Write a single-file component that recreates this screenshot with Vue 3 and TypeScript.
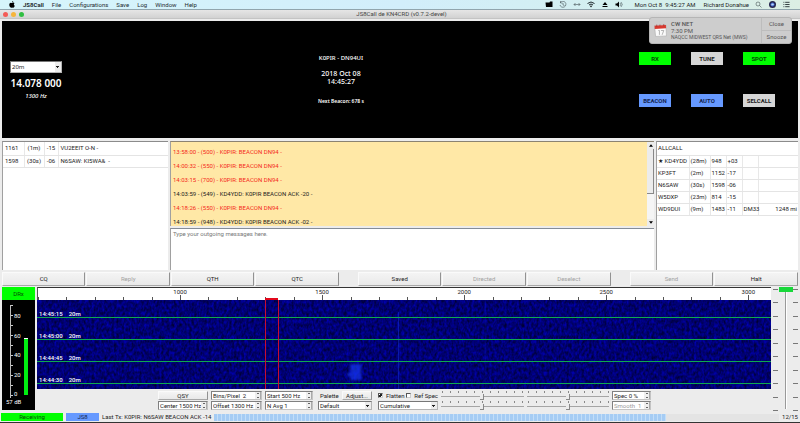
<script setup lang="ts">
import { ref } from 'vue'

interface LogLine { text: string; own: boolean }
interface Heard { call: string; age: string; offset: string; snr: string; grid: string; distance: string }

const menus = ['File', 'Configurations', 'Save', 'Log', 'Window', 'Help']
const band = ref('20m')
const palette = ref('Default')
const mode = ref('Cumulative')
const flatten = ref(true)
const refSpec = ref(false)
const outgoing = ref('')

const toggles = [
  { label: 'RX', tone: 'green' },
  { label: 'TUNE', tone: 'grey' },
  { label: 'SPOT', tone: 'green' },
  { label: 'BEACON', tone: 'blue' },
  { label: 'AUTO', tone: 'blue' },
  { label: 'SELCALL', tone: 'grey' },
]

const activity = [
  ['1161', '(1m)', '-15', 'VU2EEIT O-N -'],
  ['1598', '(30s)', '-06', 'N6SAW: KI5WA&  -'],
]

const log: LogLine[] = [
  { text: '13:58:00 - (500) - K0PIR: BEACON DN94 -', own: true },
  { text: '14:00:32 - (550) - K0PIR: BEACON DN94 -', own: true },
  { text: '14:03:15 - (700) - K0PIR: BEACON DN94 -', own: true },
  { text: '14:03:59 - (549) - KD4YDD: K0PIR BEACON ACK -20 -', own: false },
  { text: '14:18:26 - (550) - K0PIR: BEACON DN94 -', own: true },
  { text: '14:18:59 - (948) - KD4YDD: K0PIR BEACON ACK -02 -', own: false },
]

const heard: Heard[] = [
  { call: '★ KD4YDD', age: '(28m)', offset: '948', snr: '+03', grid: '', distance: '' },
  { call: 'KP3FT', age: '(2m)', offset: '1152', snr: '-17', grid: '', distance: '' },
  { call: 'N6SAW', age: '(30s)', offset: '1598', snr: '-06', grid: '', distance: '' },
  { call: 'W5DXP', age: '(23m)', offset: '814', snr: '-15', grid: '', distance: '' },
  { call: 'WD9DUI', age: '(9m)', offset: '1483', snr: '-11', grid: 'DM33', distance: '1248 mi' },
]

const actionGroups = [
  [{ t: 'CQ', off: false }, { t: 'Reply', off: true }, { t: 'QTH', off: false }, { t: 'QTC', off: false }],
  [{ t: 'Saved', off: false }, { t: 'Directed', off: true }, { t: 'Deselect', off: true }],
  [{ t: 'Send', off: true }, { t: 'Halt', off: false }],
]

const spanHz = 2580
const startHz = 500
const ticks = Array.from({ length: 26 }, (_, i) => startHz + i * 100)
const majors = [1000, 1500, 2000, 2500, 3000]
const pos = (hz: number): string => `${((hz - startHz) / spanHz) * 100}%`

const sweeps = ['14:45:15', '14:45:00', '14:44:45', '14:44:30']
const meterLabels = ['80', '60', '40', '20', '0']

const spinners = [
  [{ v: 'Bins/Pixel  2' }, { v: 'Offset 1300 Hz' }],
  [{ v: 'Start 500 Hz' }, { v: 'N Avg 1' }],
]
const sliders = ['Gain', 'Spectrum gain', 'Zero', 'Spectrum zero']
</script>

<template>
  <div class="desktop">
    <header class="menubar">
      <svg class="apple" viewBox="0 0 14 16" aria-hidden="true">
        <path d="M9.8 0c.1 1.5-1.200 3.200-2.900 3.200C6.700 1.700 8.200.2 9.800 0zM7.200 4.400c.8 0 1.700-.8 3-.8 1.200 0 2.200.6 2.800 1.500-2.500 1.500-2 4.900.5 5.900-.7 2-2.100 4.400-3.600 4.400-1 0-1.400-.6-2.600-.6s-1.700.6-2.600.6C2.700 15.400.6 11.700.6 8.700c0-3.100 1.900-4.900 3.900-4.900 1.200 0 2 .6 2.700.6z" />
      </svg>
      <a class="menu app-name" href="#">JS8Call</a>
      <a v-for="m in menus" :key="m" class="menu" href="#">{{ m }}</a>
      <span class="spring"></span>
      <div class="tray">
        <svg viewBox="0 0 16 14" aria-hidden="true"><path d="M1 3h8l1-2h5v11H2z" /></svg>
        <svg viewBox="0 0 16 14" aria-hidden="true"><path class="line" d="M3 3a6 6 0 1 1-1 5M3 0v4h4M8 4v4l3 1" /></svg>
        <svg viewBox="0 0 16 14" aria-hidden="true"><path class="line" d="M2 7h12M5 4 2 7l3 3M11 4l3 3-3 3" /></svg>
        <svg viewBox="0 0 16 14" aria-hidden="true"><path class="thick" d="M1 5q7-6 14 0M4 8q4-4 8 0" /><path d="M6 10q2-2 4 0l-2 3z" /></svg>
        <svg viewBox="0 0 16 14" aria-hidden="true"><path d="M8 2l5 6H3zM3 10h10v2H3z" /></svg>
        <svg viewBox="0 0 16 14" aria-hidden="true"><path d="M1 5h3l4-4v12L4 9H1z" /><path class="line" d="M10 4q3 3 0 6M12 2q5 5 0 10" /></svg>
      </div>
      <span class="clock">Mon Oct 8&nbsp; 9:45:27 AM</span>
      <span class="user">Richard Donahue</span>
      <div class="tray-end">
        <svg viewBox="0 0 14 14" aria-hidden="true"><circle class="line" cx="6" cy="6" r="4" /><path class="line" d="M9 9l4 4" /></svg>
        <svg viewBox="0 0 14 14" aria-hidden="true"><circle cx="7" cy="7" r="7" fill="#26264e" /><circle cx="7" cy="7" r="4" fill="#4568d2" /><path d="M4 8q3-5 6-1-3 3-6 1z" fill="#b9d8f8" /></svg>
        <svg viewBox="0 0 16 14" aria-hidden="true"><path class="thick" d="M1 2h2M5 2h10M1 7h2M5 7h10M1 12h2M5 12h10" /></svg>
      </div>
    </header>

    <div class="titlebar">
      <div class="lights"><i class="red"></i><i class="amber"></i><i class="lime"></i></div>
      <h1>JS8Call de KN4CRD (v0.7.2-devel)</h1>
    </div>

    <aside class="notice">
      <svg viewBox="0 0 24 24" aria-hidden="true">
        <path d="M1 3l21-1 1 20-20 1z" fill="#fafafa" stroke="#a7a7a7" />
        <path d="M1 3l21-1 .3 6L1.300 9z" fill="#d83a30" />
        <path d="M5 1v4M11 1v3M18 0v4" stroke="#922" />
        <path d="M8 12h2v8M13 12h5l-3 8" fill="none" stroke="#777" />
      </svg>
      <div class="notice-text"><b>CW NET</b><span>7:30 PM</span><small>NAQCC MIDWEST QRS Net (MWS)</small></div>
      <div class="notice-actions"><button>Close</button><button>Snooze</button></div>
    </aside>

    <main class="window">
      <section class="radio">
        <div class="tuning">
          <select v-model="band" class="field band" aria-label="Band"><option>20m</option></select>
          <strong>14.078 000</strong>
          <em>1300 Hz</em>
        </div>
        <div class="station">
          <b>K0PIR - DN94UI</b>
          <div class="date"><span>2018 Oct 08</span><span>14:45:27</span></div>
          <small>Next Beacon: 678 s</small>
        </div>
        <div class="toggles">
          <button v-for="t in toggles" :key="t.label" :class="t.tone">{{ t.label }}</button>
        </div>
      </section>

      <section class="panels">
        <div class="sunken">
          <table class="grid activity">
            <tbody>
              <tr v-for="row in activity" :key="row[0]"><td v-for="c in row" :key="c">{{ c }}</td></tr>
            </tbody>
          </table>
        </div>
        <div class="conversation">
          <div class="log">
            <div class="lines">
              <p v-for="l in log" :key="l.text" :class="{ own: l.own }">{{ l.text }}</p>
            </div>
            <div class="scrollbar">
              <button aria-label="Scroll up"><svg viewBox="0 0 6 4"><path d="M0 4l3-4 3 4z" /></svg></button>
              <span class="thumb"></span><span class="track"></span>
              <button aria-label="Scroll down"><svg viewBox="0 0 6 4"><path d="M0 0l3 4 3-4z" /></svg></button>
            </div>
          </div>
          <textarea v-model="outgoing" aria-label="Outgoing message" placeholder="Type your outgoing messages here."></textarea>
        </div>
        <div class="sunken">
          <table class="grid heard">
            <colgroup><col class="c-call" /><col class="c-age" /><col class="c-num" /><col class="c-num" /><col class="c-num" /><col /></colgroup>
            <tbody>
              <tr><td colspan="6">ALLCALL</td></tr>
              <tr v-for="h in heard" :key="h.call">
                <td>{{ h.call }}</td><td>{{ h.age }}</td><td>{{ h.offset }}</td><td>{{ h.snr }}</td><td>{{ h.grid }}</td><td class="distance">{{ h.distance }}</td>
              </tr>
            </tbody>
          </table>
        </div>
      </section>

      <nav class="actions">
        <div v-for="(g, i) in actionGroups" :key="i" class="group" :class="'group-' + g.length">
          <button v-for="a in g" :key="a.t" class="push" :disabled="a.off">{{ a.t }}</button>
        </div>
      </nav>

      <section class="spectrum">
        <div class="meter">
          <div class="meter-head">DRx</div>
          <div class="meter-body">
            <div class="meter-scale"><span v-for="m in meterLabels" :key="m">{{ m }}</span></div>
            <div class="meter-level"><i></i></div>
          </div>
          <div class="meter-foot">57 dB</div>
        </div>

        <div class="middle">
          <div class="scale">
            <span v-for="t in ticks" :key="t" class="tick" :class="{ major: majors.includes(t) }" :style="{ left: pos(t) }"></span>
            <span v-for="m in majors" :key="'l' + m" class="hz" :style="{ left: pos(m) }">{{ m }}</span>
            <span class="passband" :style="{ left: pos(1300) }"></span>
          </div>
          <div class="waterfall">
            <svg class="noise" aria-hidden="true">
              <filter id="grain" x="0" y="0" width="100%" height="100%" color-interpolation-filters="sRGB">
                <feTurbulence type="fractalNoise" baseFrequency="0.4 0.25" numOctaves="2" seed="8" />
                <feColorMatrix values="0 0 0 0 0  0 0 0 0 0  0.7 0 0 0 0.1  0 0 0 0 1" />
              </filter>
              <filter id="soft"><feGaussianBlur stdDeviation="1" /></filter>
              <rect width="100%" height="100%" filter="url(#grain)" />
              <rect x="49.200%" y="12" width="1" height="77" fill="#1634d8" opacity=".55" />
              <rect x="61%" y="0" width="1" height="89" fill="#101cb4" opacity=".25" />
              <svg x="42%" y="62" width="20" height="22" viewBox="0 0 20 22">
                <path d="M5 2h11v16h-11v-4h-3v-3h3z" fill="#1838f4" opacity=".7" filter="url(#soft)" />
              </svg>
            </svg>
            <div v-for="s in sweeps" :key="s" class="sweep"><span>{{ s }}</span><span>20m</span></div>
            <span class="band-edges" :style="{ left: pos(1300) }"></span>
          </div>

          <div class="controls">
            <div class="stack qsy">
              <button class="push small">QSY</button>
              <div class="spin"><input aria-label="Center" value="Center 1500 Hz" /><span class="steps"><button aria-label="Up"></button><button aria-label="Down"></button></span></div>
            </div>
            <div v-for="(col, i) in spinners" :key="i" class="stack" :class="'spins-' + i">
              <div v-for="s in col" :key="s.v" class="spin"><input :aria-label="s.v" :value="s.v" /><span class="steps"><button aria-label="Up"></button><button aria-label="Down"></button></span></div>
            </div>
            <div class="stack palette">
              <div class="pair"><label for="palette">Palette</label><button class="push small">Adjust...</button></div>
              <select id="palette" v-model="palette" class="field"><option>Default</option></select>
            </div>
            <div class="stack mode">
              <div class="pair checks">
                <label><input v-model="flatten" type="checkbox" />Flatten</label>
                <label><input v-model="refSpec" type="checkbox" />Ref Spec</label>
              </div>
              <select v-model="mode" class="field" aria-label="Spectrum mode"><option>Cumulative</option></select>
            </div>
            <div class="sliders">
              <input v-for="s in sliders" :key="s" type="range" value="50" :aria-label="s" />
            </div>
            <div class="stack spec">
              <div class="spin"><input aria-label="Spectrum share" value="Spec 0 %" /><span class="steps"><button aria-label="Up"></button><button aria-label="Down"></button></span></div>
              <div class="spin"><input aria-label="Smoothing" value="Smooth  1" disabled /><span class="steps"><button aria-label="Up" disabled></button><button aria-label="Down" disabled></button></span></div>
            </div>
          </div>
        </div>

        <div class="power">
          <div class="marks"><i v-for="n in 10" :key="n"></i></div>
          <input type="range" value="100" aria-label="Transmit power" />
          <div class="marks"><i v-for="n in 10" :key="n"></i></div>
        </div>
      </section>
    </main>

    <footer class="status">
      <span class="state">Receiving</span>
      <span class="proto">JS8</span>
      <span class="last">Last Tx: K0PIR: N6SAW BEACON ACK -14</span>
      <div class="progress" role="progressbar" aria-label="Period" aria-valuenow="12" aria-valuemax="15"><i :style="{ width: (12 / 15) * 100 + '%' }"></i></div>
      <span class="count">12/15</span>
    </footer>
  </div>
</template>

<style>
body {
  margin: 0;
  background: #ececec;
}
</style>

<style scoped>
* {
  box-sizing: border-box;
}
.desktop {
  position: relative;
  display: flex;
  flex-direction: column;
  min-height: 100vh;
  background: #ececec;
  border-bottom: 1px solid #333;
  font-family: Roboto, "Liberation Sans", sans-serif;
  font-size: 6px;
  line-height: 8px;
  color: #1c1c1c;
  overflow: hidden;
}
button, input, select, textarea {
  margin: 0;
  padding: 0;
  border: 0;
  border-radius: 0;
  font: inherit;
  color: inherit;
  min-width: 0;
}
h1 {
  margin: 0;
}

.menubar {
  display: flex;
  align-items: center;
  height: 10px;
  padding: 0 10px 0 9px;
  background: linear-gradient(90deg, #d6f5fb, #d2eefb 50%, #d4f0ee 80%, #dceee4);
  border-bottom: 1px solid #91a5ad;
}
.apple {
  width: 6px;
  height: 7px;
  margin-right: 8px;
}
.menu {
  margin-right: 8px;
  color: #1d2a30;
  text-decoration: none;
}
.app-name {
  font-weight: 700;
}
.spring {
  flex: 1;
}
.tray {
  display: flex;
  gap: 6px;
  margin-right: 12px;
}
.tray svg {
  width: 8px;
  height: 7px;
}
.clock {
  margin-right: 8px;
}
.user {
  margin-right: 6px;
}
.tray-end {
  display: flex;
  gap: 7px;
}
.tray-end svg {
  width: 7px;
  height: 7px;
}
.line {
  fill: none;
  stroke: #2b3438;
  stroke-width: 1;
}
.thick {
  fill: none;
  stroke: #1f282c;
  stroke-width: 2;
}

.titlebar {
  display: grid;
  grid-template-columns: 1fr auto 1fr;
  align-items: center;
  height: 9px;
  padding-left: 3px;
  background: linear-gradient(#e6e6e6, #d2d2d2);
  border-bottom: 1px solid #c4c4c4;
}
.titlebar h1 {
  font-size: 6px;
  font-weight: 400;
  color: #444;
}
.lights {
  display: flex;
  gap: 3px;
}
.lights i {
  width: 5px;
  height: 5px;
  border-radius: 50%;
}
.red { background: #f45b55; }
.amber { background: #f6b53c; }
.lime { background: #30bf42; }

.notice {
  position: absolute;
  top: 17px;
  right: 8px;
  z-index: 2;
  display: flex;
  align-items: center;
  width: 143px;
  height: 27px;
  border: 1px solid #b5b5b5;
  border-radius: 3px;
  background: #cdcdcd;
  color: #555;
}
.notice svg {
  width: 13px;
  height: 13px;
  margin: 0 4px;
}
.notice-text {
  flex: 1;
  display: flex;
  flex-direction: column;
  line-height: 7px;
  white-space: nowrap;
}
.notice-text b {
  font-weight: 500;
}
.notice-text small {
  font-size: 5px;
}
.notice-actions {
  display: flex;
  flex-direction: column;
  align-self: stretch;
  width: 30px;
  border-left: 1px solid #bdbdbd;
}
.notice-actions button {
  flex: 1;
  background: none;
}
.notice-actions button + button {
  border-top: 1px solid #bdbdbd;
}

.window {
  display: flex;
  flex-direction: column;
  flex: 1;
  padding: 2px 2px 0;
}
.radio {
  display: flex;
  min-height: 117px;
  background: #000;
  color: #fff;
  font-family: "Noto Sans", sans-serif;
}
.tuning {
  display: flex;
  flex-direction: column;
  align-items: center;
  width: 68px;
  padding-top: 40px;
}
.tuning strong {
  margin-top: 4px;
  font-size: 10px;
  font-weight: 600;
  line-height: 13px;
  white-space: nowrap;
}
.tuning em {
  margin-top: 2px;
  font-weight: 500;
}
.field {
  appearance: none;
  height: 9px;
  padding: 0 8px 0 1px;
  border: 1px solid #b4b4b4;
  border-top-color: #777;
  border-left-color: #777;
  color: #222;
  background:
    linear-gradient(#222, #222) right 2px top 3px / 3px 1px no-repeat,
    linear-gradient(#222, #222) right 3px top 4px / 1px 1px no-repeat,
    linear-gradient(#ececec, #ececec) right 0 top 0 / 6px 100% no-repeat,
    #fff;
}
.field.band {
  width: 52px;
  height: 12px;
  background-position: right 2px top 4px, right 3px top 5px, right 0 top 0;
}
.station {
  flex: 1;
  display: flex;
  flex-direction: column;
  align-items: center;
  padding-top: 33px;
}
.station b {
  font-weight: 500;
}
.date {
  display: flex;
  flex-direction: column;
  align-items: center;
  margin: 8px 0 11px;
  font-size: 7px;
  line-height: 8px;
  font-weight: 500;
}
.station small {
  font-size: 5px;
  font-weight: 600;
}
.toggles {
  display: grid;
  grid-template-columns: repeat(3, 32px);
  grid-auto-rows: 13px;
  gap: 29px 20px;
  padding: 31px 23px 0 27px;
}
.toggles button {
  font-family: Roboto, sans-serif;
  font-weight: 700;
  color: #1a1a1a;
}
.toggles .green { background: #0f0; color: #064a06; }
.toggles .grey { background: #d6d6d6; }
.toggles .blue { background: #69f; color: #142450; }

.panels {
  display: grid;
  grid-template-columns: minmax(0, 166fr) minmax(0, 484fr) minmax(0, 142fr);
  gap: 2px;
  flex: 1;
  margin-top: 3px;
  min-height: 129px;
}
.sunken {
  background: #fff;
  border-top: 1px solid #8b8b8b;
  border-left: 1px solid #a0a0a0;
}
.grid {
  width: 100%;
  border-collapse: collapse;
  white-space: pre;
}
.grid td {
  height: 12px;
  padding: 0 2px;
  border-right: 1px solid #e8e8e8;
  border-bottom: 1px solid #e4e4e4;
}
.grid tr:first-child td {
  height: 13px;
}
.grid td:last-child {
  border-right: 0;
}
.activity td:nth-child(1) { width: 21px; }
.activity td:nth-child(2) { width: 20px; text-align: center; }
.activity td:nth-child(3) { width: 14px; text-align: center; }
.heard {
  table-layout: fixed;
}
.heard td {
  padding: 0 1px;
}
.heard .distance {
  text-align: right;
}
.c-call { width: 32px; }
.c-age { width: 21px; }
.c-num { width: 16px; }

.conversation {
  display: flex;
  flex-direction: column;
  gap: 2px;
}
.log {
  display: flex;
  height: 85px;
  border-top: 1px solid #8b8371;
  border-left: 1px solid #a0a0a0;
  background: #ffe8a6;
}
.lines {
  flex: 1;
  padding: 3px 2px 0;
  overflow: hidden;
}
.lines p {
  height: 14px;
  line-height: 14px;
  margin: 0;
}
.lines .own {
  color: #f42a1a;
}
.scrollbar {
  display: flex;
  flex-direction: column;
  width: 7px;
  background: #f5f5f5;
}
.scrollbar button {
  display: flex;
  align-items: center;
  justify-content: center;
  height: 7px;
  background: #ececec;
}
.scrollbar svg {
  width: 4px;
  height: 3px;
}
.thumb {
  flex: 45;
  background: #ececec;
  border-right: 1px solid #888;
  border-bottom: 1px solid #888;
}
.track {
  flex: 25;
}
.conversation textarea {
  flex: 1;
  resize: none;
  padding: 1px 2px;
  border-top: 1px solid #858c96;
  border-left: 1px solid #a0a0a0;
  background: #fff;
  outline: 0;
}
textarea::placeholder {
  color: #777;
}

.push {
  background: linear-gradient(#f4f4f4, #e9e9e9);
  border: 1px solid #fafafa;
  border-right-color: #929292;
  border-bottom-color: #a8a8a8;
}
.push:disabled {
  color: #a2a2a2;
}
.actions {
  display: flex;
  gap: 19px;
  margin-top: 2px;
}
.group {
  display: flex;
  gap: 1px;
}
.group-4 { flex: 4; }
.group-3 { flex: 3; }
.group-2 { flex: 2; }
.group .push {
  flex: 1;
  height: 14px;
}

.spectrum {
  display: flex;
  gap: 2px;
  margin-top: 1px;
}
.meter {
  display: flex;
  flex-direction: column;
  width: 33px;
  margin-bottom: 2px;
  background: #000;
  color: #fff;
}
.meter-head {
  height: 13px;
  line-height: 13px;
  background: #0f0;
  color: #064a06;
  text-align: center;
}
.meter-body {
  flex: 1;
  display: flex;
  gap: 2px;
  padding: 5px 7px 0 8px;
}
.meter-scale {
  flex: 1;
  display: flex;
  flex-direction: column;
  justify-content: space-between;
  padding: 7px 0 0 3px;
  margin-bottom: -3px;
  background: repeating-linear-gradient(#ccc 0 1px, transparent 1px 10px) 0 0 / 2px 92px no-repeat;
  border-left: 1px solid #bbb;
}
.meter-level {
  flex: none;
  display: flex;
  align-items: flex-end;
  width: 4px;
}
.meter-level i {
  width: 100%;
  height: 57px;
  border-top: 1px solid #fff;
  background: #0e1;
}
.meter-foot {
  height: 15px;
  line-height: 14px;
  padding-left: 4px;
}
.middle {
  flex: 1;
  min-width: 0;
}
.scale {
  position: relative;
  height: 13px;
  background: #fff;
  border-top: 1px solid #333;
  border-left: 1px solid #555;
  overflow: hidden;
}
.tick {
  position: absolute;
  bottom: 0;
  width: 1px;
  height: 3px;
  background: #555;
}
.tick.major {
  height: 5px;
}
.hz {
  position: absolute;
  top: 0;
  transform: translateX(-50%);
}
.passband {
  position: absolute;
  bottom: 0;
  width: 13px;
  height: 2px;
  background: #e3081c;
}
.waterfall {
  position: relative;
  height: 89px;
  background: #00006c;
  overflow: hidden;
}
.noise {
  position: absolute;
  inset: 0;
  width: 100%;
  height: 100%;
}
.sweep {
  position: relative;
  display: flex;
  align-items: flex-end;
  gap: 6px;
  height: 22px;
  padding-left: 2px;
  border-bottom: 1px solid #0fa850;
  color: #fff;
  font-weight: 500;
  line-height: 7px;
}
.sweep:first-of-type {
  height: 18px;
}
.band-edges {
  position: absolute;
  top: 0;
  bottom: 0;
  width: 14px;
  border: solid #c80c30;
  border-width: 0 1px;
}
.controls {
  display: flex;
  gap: 3px;
  padding: 2px 0 2px;
  margin-left: 121px;
}
.stack {
  display: flex;
  flex-direction: column;
  gap: 1px;
  width: 51px;
}
.stack.spins-1 { width: 48px; }
.stack.palette { width: 54px; margin-left: 2px; }
.stack.mode { width: 60px; margin-left: 3px; }
.stack.spec { width: 39px; }
.stack.qsy { width: 50px; }
.push.small {
  height: 9px;
  line-height: 7px;
}
.spin {
  display: flex;
  height: 9px;
  background: #fff;
  border: 1px solid #c4c4c4;
  border-top-color: #808080;
  border-left-color: #808080;
}
.spin input {
  flex: 1;
  width: 0;
  padding-left: 1px;
  background: none;
  line-height: 7px;
  white-space: pre;
}
.spin input:disabled {
  color: #999;
}
.steps {
  display: flex;
  flex-direction: column;
  width: 6px;
  background: #eee;
}
.steps button {
  flex: 1;
  background: linear-gradient(#666, #666) center / 2px 1px no-repeat;
  border-right: 1px solid #aaa;
}
.pair {
  display: flex;
  align-items: center;
  justify-content: space-between;
  height: 9px;
  padding-left: 2px;
  white-space: nowrap;
}
.pair .push {
  width: 30px;
}
.pair.checks {
  padding: 0;
}
.checks label {
  display: flex;
  align-items: center;
  gap: 3px;
}
.checks input {
  appearance: none;
  width: 5px;
  height: 5px;
  background: #fff;
  border: 1px solid #ccc;
  border-top-color: #555;
  border-left-color: #555;
}
.checks input:checked {
  background: linear-gradient(135deg, #fff 30%, #222 30% 70%, #fff 70%);
}
.sliders {
  flex: 1;
  max-width: 168px;
  display: grid;
  grid-template-columns: 1fr 1fr;
  gap: 1px 3px;
}
.sliders input {
  appearance: none;
  width: 100%;
  height: 9px;
  background:
    repeating-linear-gradient(90deg, #888 0 1px, transparent 1px 8px) 1px 0 / 100% 2px no-repeat,
    linear-gradient(#a5a5a5, #a5a5a5) 0 5px / 100% 1px no-repeat;
}
.sliders input::-webkit-slider-thumb {
  appearance: none;
  width: 4px;
  height: 6px;
  margin-top: 3px;
  background: #ececec;
  border: solid #888;
  border-width: 0 1px 1px 0;
}
.power {
  display: flex;
  justify-content: space-between;
  width: 25px;
}
.marks {
  display: flex;
  flex-direction: column;
  justify-content: space-between;
  padding: 2px 0 1px;
}
.marks i {
  width: 5px;
  height: 1px;
  background: #777;
}
.power input {
  appearance: none;
  writing-mode: vertical-lr;
  direction: rtl;
  width: 14px;
  height: 122px;
  background: linear-gradient(90deg, #999 1px, #fff 1px) center / 2px 100% no-repeat;
}
.power input::-webkit-slider-thumb {
  appearance: none;
  width: 14px;
  height: 5px;
  background: #18d83a;
}

.status {
  display: flex;
  align-items: center;
  gap: 3px;
  height: 10px;
  padding: 0 2px 0 1px;
  white-space: nowrap;
}
.status span {
  height: 8px;
}
.state {
  width: 62px;
  background: #0f0;
  color: #064a06;
  text-align: center;
}
.proto {
  width: 33px;
  background: #69f;
  color: #142450;
  text-align: center;
}
.last {
  min-width: 108px;
}
.progress {
  flex: 1;
  height: 7px;
  background: #e4e4e4;
}
.progress i {
  display: block;
  height: 100%;
  background: repeating-linear-gradient(90deg, #a5ccf4 0 3px, #c3def8 3px 4px);
}
.count {
  min-width: 14px;
  text-align: right;
}
</style>
